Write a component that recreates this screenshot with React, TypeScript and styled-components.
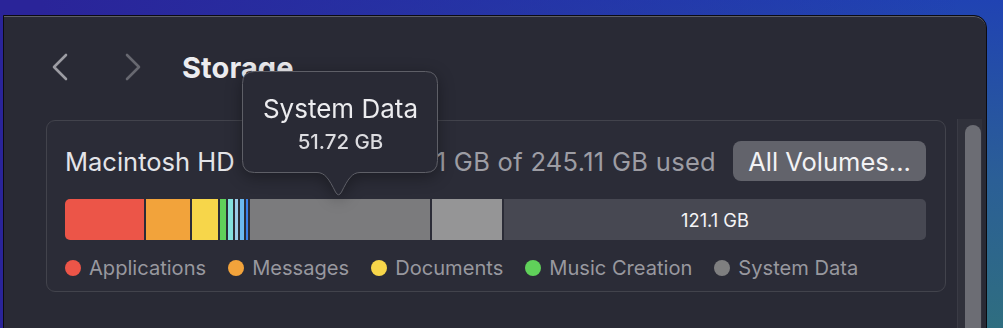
import styled, { createGlobalStyle } from "styled-components";

const GlobalStyle = createGlobalStyle`
  html, body {
    margin: 0;
    padding: 0;
    background: #292a35;
  }
  body {
    font-family: Inter, "Noto Sans", "Liberation Sans", sans-serif;
    -webkit-font-smoothing: antialiased;
  }
`;

const Desktop = styled.div`
  width: 1003px;
  height: 328px;
  box-sizing: border-box;
  padding: 15px 16px 0 3px;
  overflow: hidden;
  background:
    linear-gradient(90deg, #2a2499 0%, #2a2499 4%, rgba(42, 36, 153, 0) 96%),
    linear-gradient(180deg, #2043b3 0%, #2b5f96 55%, #2f6e80 100%);
`;

const Window = styled.div`
  position: relative;
  height: 340px;
  box-sizing: border-box;
  background: #292a35;
  border: 1px solid #0b0b10;
  border-top-right-radius: 13px;
  box-shadow: inset 0 1px 0 #5d5e66;
  display: flex;
  flex-direction: column;
`;

const Toolbar = styled.div`
  height: 104px;
  flex-shrink: 0;
  display: flex;
  align-items: flex-start;
  padding: 37px 0 0 48px;
  box-sizing: border-box;
`;

const NavButton = styled.div<{ $dim?: boolean }>`
  width: 16px;
  height: 28px;
  margin-right: 57px;
  color: ${(p) => (p.$dim ? "#676870" : "#9c9ca3")};
  svg {
    display: block;
  }
`;

const Title = styled.h1`
  margin: -3px 0 0 -16px;
  font-size: 29px;
  font-weight: 700;
  color: #ececef;
  letter-spacing: 0.1px;
`;

const Body = styled.div`
  flex: 1;
  min-height: 0;
  display: flex;
`;

const ScrollArea = styled.div`
  flex: 1;
  padding: 0 11px 0 42px;
`;

const Panel = styled.section`
  height: 172px;
  box-sizing: border-box;
  border: 1px solid #42434c;
  border-radius: 9px;
  background: #2b2c37;
  padding: 20px 19px 0 18px;
`;

const HeaderRow = styled.div`
  display: flex;
  align-items: center;
  height: 40px;
`;

const DiskName = styled.div`
  font-size: 25.5px;
  color: #e4e4e8;
  flex: 1;
`;

const Usage = styled.div`
  font-size: 25.5px;
  letter-spacing: 0.3px;
  color: #9d9da4;
  margin-right: 17px;
`;

const VolumesButton = styled.button`
  height: 40px;
  width: 193px;
  border: none;
  border-radius: 8px;
  background: #62636b;
  color: #f2f2f4;
  font-family: inherit;
  font-size: 25.5px;
  padding: 0;
`;

const Bar = styled.div`
  margin-top: 18px;
  height: 41px;
  display: flex;
  gap: 2px;
  border-radius: 5px;
  overflow: hidden;
`;

const Segment = styled.div<{ $w?: number; $c: string }>`
  ${(p) => (p.$w ? `width: ${p.$w}px;` : "flex: 1;")}
  background: ${(p) => p.$c};
  display: flex;
  align-items: center;
  justify-content: center;
  color: #f4f4f6;
  font-size: 18.3px;
`;

const Legend = styled.div`
  display: flex;
  align-items: center;
  gap: 22px;
  margin-top: 17px;
`;

const LegendItem = styled.div`
  display: flex;
  align-items: center;
  gap: 8px;
  font-size: 20.1px;
  line-height: 22px;
  color: #98989f;
`;

const Dot = styled.span<{ $c: string }>`
  width: 16px;
  height: 16px;
  border-radius: 50%;
  background: ${(p) => p.$c};
`;

const ScrollTrack = styled.div`
  width: 25px;
  margin-right: 4px;
  margin-top: -1px;
  box-sizing: border-box;
  background: #30313b;
  border-left: 1px solid #3a3b45;
  padding: 6px 0 0 7px;
`;

const Thumb = styled.div`
  width: 16px;
  height: 260px;
  border-radius: 8px;
  background: #6c6d74;
`;

const Tooltip = styled.div`
  position: absolute;
  left: 238px;
  top: 55px;
  width: 197px;
  height: 128px;
  z-index: 2;
  filter: drop-shadow(0 4px 8px rgba(0, 0, 0, 0.35));
  svg {
    position: absolute;
    inset: 0;
  }
`;

const TipText = styled.div`
  position: relative;
  height: 102px;
  display: flex;
  flex-direction: column;
  align-items: center;
  justify-content: center;
  padding-top: 3px;
  box-sizing: border-box;
`;

const TipTitle = styled.div`
  font-size: 26px;
  color: #ececef;
  line-height: 32px;
`;

const TipValue = styled.div`
  margin-top: 4px;
  font-size: 20.5px;
  font-weight: 500;
  color: #dcdce0;
  line-height: 26px;
`;

const segments = [
  { w: 79, c: "#ec5548" },
  { w: 44, c: "#f2a33b" },
  { w: 26, c: "#f7d64a" },
  { w: 6, c: "#60d15a" },
  { w: 5, c: "#82e1df" },
  { w: 3, c: "#9ccbe9" },
  { w: 4, c: "#6db9ee" },
  { w: 2, c: "#3b7fe8" },
  { w: 180, c: "#7b7b7d" },
  { w: 70, c: "#959596" },
];

const legend = [
  { label: "Applications", c: "#ec5548" },
  { label: "Messages", c: "#f2a33b" },
  { label: "Documents", c: "#f7d64a" },
  { label: "Music Creation", c: "#60d15a" },
  { label: "System Data", c: "#7f7f80" },
];

const Chevron = ({ dir }: { dir: "left" | "right" }) => (
  <svg width="16" height="28" viewBox="0 0 16 28">
    <polyline
      points={dir === "left" ? "14,2 2,14 14,26" : "2,2 14,14 2,26"}
      fill="none"
      stroke="currentColor"
      strokeWidth="2.6"
      strokeLinecap="round"
      strokeLinejoin="round"
    />
  </svg>
);

const App = () => {
  return (
    <>
      <GlobalStyle />
      <Desktop>
        <Window>
          <Toolbar>
            <NavButton>
              <Chevron dir="left" />
            </NavButton>
            <NavButton $dim>
              <Chevron dir="right" />
            </NavButton>
            <Title>Storage</Title>
          </Toolbar>
          <Body>
            <ScrollArea>
              <Panel>
                <HeaderRow>
                  <DiskName>Macintosh HD</DiskName>
                  <Usage>124.01 GB of 245.11 GB used</Usage>
                  <VolumesButton>All Volumes...</VolumesButton>
                </HeaderRow>
                <Bar>
                  {segments.map((s, i) => (
                    <Segment key={i} $w={s.w} $c={s.c} />
                  ))}
                  <Segment $c="#474852">121.1 GB</Segment>
                </Bar>
                <Legend>
                  {legend.map((l) => (
                    <LegendItem key={l.label}>
                      <Dot $c={l.c} />
                      {l.label}
                    </LegendItem>
                  ))}
                </Legend>
              </Panel>
            </ScrollArea>
            <ScrollTrack>
              <Thumb />
            </ScrollTrack>
          </Body>
          <Tooltip>
            <svg width="197" height="128" viewBox="0 0 197 128">
              <path
                d="M12.5 .5 H183.5 Q195.5 .5 195.5 12.5 V89.5 Q195.5 101.5 183.5 101.5 H118 C110 101.5 106 108 99.5 121 Q96.5 126.5 93.5 121 C87 108 83 101.5 75 101.5 H12.5 Q.5 101.5 .5 89.5 V12.5 Q.5 .5 12.5 .5 Z"
                fill="#292a35"
                stroke="#5e5f67"
                strokeWidth="1"
              />
            </svg>
            <TipText>
              <TipTitle>System Data</TipTitle>
              <TipValue>51.72 GB</TipValue>
            </TipText>
          </Tooltip>
        </Window>
      </Desktop>
    </>
  );
};

export default App;
